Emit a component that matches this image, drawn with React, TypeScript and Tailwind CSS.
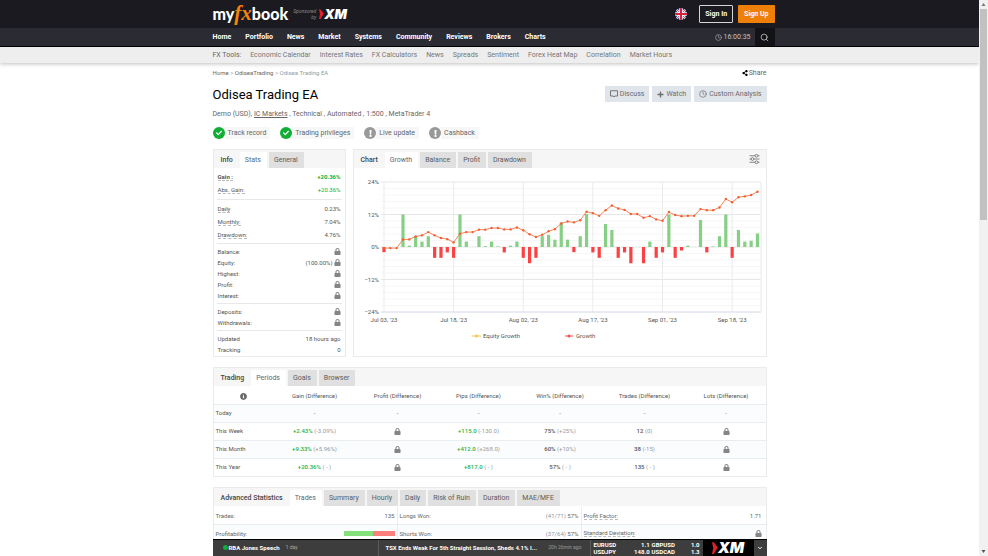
import React, { useState } from 'react';
import clsx from 'clsx';
import { Clock, Search, ChevronDown } from 'lucide-react';
import { FaLock, FaCheck, FaExclamation, FaPlus, FaShareAlt, FaInfoCircle } from 'react-icons/fa';

const navLinks = ['Home', 'Portfolio', 'News', 'Market', 'Systems', 'Community', 'Reviews', 'Brokers', 'Charts'];

const toolLinks = ['Economic Calendar', 'Interest Rates', 'FX Calculators', 'News', 'Spreads', 'Sentiment', 'Forex Heat Map', 'Correlation', 'Market Hours'];

const badges = [
  { label: 'Track record', ok: true },
  { label: 'Trading privileges', ok: true },
  { label: 'Live update', ok: false },
  { label: 'Cashback', ok: false },
];

// Cumulative growth in percent, one entry per trading day
const growth = [
  -0.4, -0.4, -0.4, 2.8, 2.8, 3.9, 4.3, 5.5, 4.3, 3.3, 2.9, 1.7, 4.9, 5.5, 5.5, 6.4, 6.4, 7, 7, 6.5,
  6.5, 7.2, 6.2, 4.7, 3.7, 4.5, 5.8, 6.6, 8.7, 9.4, 9.1, 9.9, 13, 12.5, 11.5, 13.6, 15.3, 14.2, 13.7, 12.2,
  12.2, 10.8, 11.4, 10.2, 9.7, 12.9, 11.8, 11.4, 11.5, 11.5, 14, 13.6, 13.6, 14.6, 17.7, 16.5, 18.4, 18.7, 19.2, 20.4,
];

// Daily result bars
const daily = [
  -1.9, 0, 0, 12, 0.5, 4, 2, 4, -4, -4, -2, -4, 12, 2, 0, 4, 0.3, 2, 0.2, -2,
  0.5, 2, -4, -6, -4, 4, 4.5, 2.7, 9, 2.7, -1.9, 4, 12.2, -2, -4, 8.5, 6.3, -4, -2, -6,
  0, -6, 2, -4, -2, 12, -4, -1.3, 0.5, 0, 10, -2, 0.2, 4, 12, -4, 6.3, 2, 2.3, 5,
];

const dates = ["Jul 03, '23", "Jul 18, '23", "Aug 02, '23", "Aug 17, '23", "Sep 01, '23", "Sep 18, '23"];

interface Stat {
  label: string;
  value: string;
  dotted?: boolean;
  bold?: boolean;
  green?: boolean;
  locked?: boolean;
}

const statGroups: { tall: boolean; rows: Stat[] }[] = [
  {
    tall: true,
    rows: [
      { label: 'Gain :', value: '+20.36%', dotted: true, bold: true, green: true },
      { label: 'Abs. Gain:', value: '+20.36%', dotted: true, green: true },
    ],
  },
  {
    tall: true,
    rows: [
      { label: 'Daily', value: '0.23%', dotted: true },
      { label: 'Monthly:', value: '7.04%', dotted: true },
      { label: 'Drawdown:', value: '4.76%', dotted: true },
    ],
  },
  {
    tall: false,
    rows: [
      { label: 'Balance:', value: '', locked: true },
      { label: 'Equity:', value: '(100.00%)', locked: true },
      { label: 'Highest:', value: '', locked: true },
      { label: 'Profit:', value: '', locked: true },
      { label: 'Interest:', value: '', locked: true },
    ],
  },
  {
    tall: false,
    rows: [
      { label: 'Deposits:', value: '', locked: true },
      { label: 'Withdrawals:', value: '', locked: true },
    ],
  },
  {
    tall: false,
    rows: [
      { label: 'Updated', value: '18 hours ago' },
      { label: 'Tracking', value: '0' },
    ],
  },
];

const periods = [
  { name: 'Today' },
  { name: 'This Week', gain: ['+2.43%', '(-3.09%)'], pips: ['+115.0', '(-130.0)'], win: ['75%', '(+25%)'], trades: ['12', '(0)'] },
  { name: 'This Month', gain: ['+9.33%', '(+5.96%)'], pips: ['+412.0', '(+268.0)'], win: ['60%', '(+10%)'], trades: ['38', '(-15)'] },
  { name: 'This Year', gain: ['+20.36%', '( - )'], pips: ['+817.0', '( - )'], win: ['57%', '( - )'], trades: ['135', '( - )'] },
];

const quotes = [
  ['EURUSD', '1.1', 'GBPUSD', '1.0'],
  ['USDJPY', '148.0', 'USDCAD', '1.3'],
];

const Lock = () => <FaLock className="inline-block size-[7px] text-[#858585]" aria-label="Locked" />;

const XmLogo = ({ large }: { large?: boolean }) => (
  <span className="flex items-center text-white" aria-label="XM">
    <svg viewBox="0 0 6 12" className={large ? 'h-3 w-1.5' : 'h-[10px] w-[5px]'}>
      <path d="M0 0 L2.2 0.8 L5.8 5.4 L1.8 12 L0 12 L1.2 6 Z" fill="#e0202b" />
    </svg>
    <span className={clsx('font-[Inter,sans-serif] leading-4 font-black italic', large ? 'text-[15px]' : 'text-[13px]')}>XM</span>
  </span>
);

const UkFlag = () => (
  <svg viewBox="0 0 24 24" className="size-3">
    <defs>
      <clipPath id="flag">
        <circle cx="12" cy="12" r="12" />
      </clipPath>
    </defs>
    <g clipPath="url(#flag)">
      <rect width="24" height="24" fill="#2b3f96" />
      <path d="M0 0 L24 24 M24 0 L0 24" stroke="#fff" strokeWidth="4" />
      <path d="M0 0 L24 24 M24 0 L0 24" stroke="#d8213b" strokeWidth="1.6" />
      <path d="M12 0 V24 M0 12 H24" stroke="#fff" strokeWidth="7" />
      <path d="M12 0 V24 M0 12 H24" stroke="#d8213b" strokeWidth="4" />
    </g>
  </svg>
);

const TabBar = ({ title, tabs, children }: { title: string; tabs: string[]; children?: React.ReactNode }) => {
  const [active, setActive] = useState(tabs[0]);
  return (
    <div className="flex h-[18px] items-end bg-[#f6f6f6] pl-[7px] text-[7px] leading-4">
      <h2 className="mr-[7px] font-medium text-[#444]">{title}</h2>
      <div className="flex gap-[2px]" role="tablist">
        {tabs.map(tab => (
          <button
            key={tab}
            role="tab"
            aria-selected={tab === active}
            onClick={() => setActive(tab)}
            className={clsx('h-4 pr-[6px] pl-[5px]', tab === active ? 'bg-white text-[#56697d]' : 'bg-[#e0e0e0] text-[#5c5c5c]')}
          >
            {tab}
          </button>
        ))}
      </div>
      {children}
    </div>
  );
};

const Header = () => (
  <header className="shadow-[0_1px_4px_rgba(0,0,0,0.25)]">
    <div className="bg-[#1a1a20]">
      <div className="mx-auto max-w-[554px]">
        <div className="-mr-2 flex h-7 items-center">
          <a href="#" className="flex items-baseline font-[Lato,sans-serif] text-[16px] leading-7 font-black text-white" aria-label="myfxbook">
            my
            <span className="font-['Liberation_Serif',serif] text-[21px] leading-5 font-bold text-[#f5840c] italic">fx</span>
            book
          </a>
          <div className="ml-[5px] flex items-center gap-[3px]">
            <span className="text-right text-[5px] leading-[6px] text-[#8b8b90] italic">
              Sponsored
              <br />
              by
            </span>
            <XmLogo />
          </div>
          <div className="ml-auto flex items-center text-[7px] font-bold text-white">
            <button aria-label="Language" className="mr-3">
              <UkFlag />
            </button>
            <button className="mr-[5px] h-[18px] rounded-[1px] border border-[#d5d5d5] px-[5px]">Sign In</button>
            <button className="h-[18px] rounded-[1px] bg-[#ee7f08] px-[6px]">Sign Up</button>
          </div>
        </div>
      </div>
    </div>
    <div className="border-b border-black bg-[#2a2b33]">
      <div className="mx-auto max-w-[554px]">
        <div className="-mr-2 flex h-[18px] items-center text-[7px] text-white">
          <nav className="flex gap-[14px] font-bold">
            {navLinks.map(link => (
              <a key={link} href="#">{link}</a>
            ))}
          </nav>
          <div className="ml-auto flex h-full items-center">
            <Clock className="mr-[2px] size-[7px] text-[#b5b5b8]" />
            <span className="mr-1 text-[#c2c2c6]">16:00:35</span>
            <button aria-label="Search" className="flex h-full w-5 items-center justify-center bg-[#131317]">
              <Search className="size-[9px] text-[#d0d0d0]" />
            </button>
          </div>
        </div>
      </div>
    </div>
    <div className="bg-[#eee]">
      <nav className="mx-auto flex h-4 max-w-[554px] items-center gap-[9px] text-[7px] whitespace-nowrap text-[#777]">
        <span className="text-[#666]">FX Tools:</span>
        {toolLinks.map(link => (
          <a key={link} href="#">{link}</a>
        ))}
      </nav>
    </div>
  </header>
);

const StatsPanel = () => (
  <section className="w-[133px] shrink-0 border border-[#ebebeb]">
    <TabBar title="Info" tabs={['Stats', 'General']} />
    {/* Stat rows, split by thin rules */}
    <div className="px-[3px] text-[6px] text-[#555]">
      {statGroups.map((group, i) => (
        <dl key={i} className="border-b border-[#e8e8e8] py-[2px] first:pb-[3px] last:border-b-0 last:pb-[1px]">
          {group.rows.map(row => (
            <div key={row.label} className={clsx('flex items-center justify-between px-[1px]', group.tall ? 'h-[13px]' : 'h-[11px]')}>
              <dt className={clsx('leading-[7px]', row.dotted && 'border-b border-dashed border-[#bbb]', row.bold && 'font-bold')}>{row.label}</dt>
              <dd className={clsx('flex items-center gap-[1px]', row.green && 'text-[#0faf35]', row.bold && 'font-bold')}>
                {row.value}
                {row.locked && <Lock />}
              </dd>
            </div>
          ))}
        </dl>
      ))}
    </div>
  </section>
);

const GrowthChart = () => {
  const left = 30;
  const top = 14;
  const height = 130;
  const step = 6.33;
  const x = (i: number) => left + i * step;
  const y = (v: number) => top + ((24 - v) / 48) * height;
  const line = growth.map((v, i) => `${x(i)},${y(v)}`).join(' ');

  return (
    <svg viewBox="0 0 412 188" className="w-full font-[Roboto,sans-serif]" role="img" aria-label="Growth chart">
      {/* Grid */}
      {Array.from({ length: 21 }, (_, i) => (
        <path key={i} d={`M27 ${top + i * 6.5} H407`} stroke={i % 5 === 0 ? '#e6e6e6' : '#f6f6f6'} />
      ))}
      {dates.map((date, i) => (
        <g key={date}>
          <path d={`M${x(i * 11)} ${top} V${top + height}`} stroke="#ebebeb" />
          <text x={x(i * 11)} y="154" textAnchor="middle" fontSize="6" fill="#555">{date}</text>
        </g>
      ))}
      <path d={`M407 ${top} V${top + height}`} stroke="#ebebeb" />
      <path d={`M27 ${top + height} H407`} stroke="#dfe3f2" />
      {[24, 12, 0, -12, -24].map(v => (
        <text key={v} x="25" y={y(v) + 2} textAnchor="end" fontSize="6" fill="#555">{v < 0 ? `−${-v}` : v}%</text>
      ))}
      {/* Daily bars */}
      {daily.map((v, i) => (
        <rect key={i} x={x(i) - 1.6} y={v > 0 ? y(v) : y(0)} width="3.2" height={(Math.abs(v) / 48) * height} fill={v > 0 ? '#86cf84' : '#fb4141'} />
      ))}
      <polyline points={line} fill="none" stroke="#f5764e" strokeWidth="0.9" />
      {growth.map((v, i) => (
        <circle key={i} cx={x(i)} cy={y(v)} r="1.2" fill="#f2602f" />
      ))}
      {/* Legend */}
      <path d="M118 168 H127" stroke="#f9c440" />
      <circle cx="122.500" cy="168" r="1.500" fill="#f9c440" />
      <text x="129" y="170" fontSize="6" fill="#555">Equity Growth</text>
      <path d="M211 168 H219" stroke="#f5534a" />
      <circle cx="215" cy="168" r="1.500" fill="#f5534a" />
      <text x="222" y="170" fontSize="6" fill="#555">Growth</text>
    </svg>
  );
};

const ChartPanel = () => (
  <section className="min-w-0 flex-1 border border-[#ebebeb]">
    <TabBar title="Chart" tabs={['Growth', 'Balance', 'Profit', 'Drawdown']}>
      <button aria-label="Chart settings" className="mr-[6px] ml-auto flex h-[18px] items-center">
        <svg viewBox="0 0 22 20" className="h-[10px] w-[11px]" fill="none" stroke="#555" strokeWidth="1.4">
          <path d="M1 3.500 H12 M18 3.500 H21 M1 10 H4 M10 10 H21 M1 16.500 H12 M18 16.500 H21" />
          <circle cx="15" cy="3.500" r="2.800" />
          <circle cx="7" cy="10" r="2.800" />
          <circle cx="15" cy="16.500" r="2.800" />
        </svg>
      </button>
    </TabBar>
    <GrowthChart />
  </section>
);

const Difference = ({ pair, green }: { pair?: string[]; green?: boolean }) => (
  <td>
    {pair ? (
      <>
        <span className={green ? 'font-medium text-[#1fb141]' : 'font-medium text-[#555]'}>{pair[0]}</span>{' '}
        <span className="text-[#999]">{pair[1]}</span>
      </>
    ) : (
      '-'
    )}
  </td>
);

const TradingPanel = () => (
  <section className="border border-[#ebebeb]">
    <TabBar title="Trading" tabs={['Periods', 'Goals', 'Browser']} />
    <table className="w-full table-fixed text-center text-[6px] leading-2 text-[#666]">
      <thead>
        <tr className="h-[18px] text-[#555]">
          <th className="w-[60px] pt-[3px]">
            <FaInfoCircle className="mx-auto size-[7px] text-[#666]" aria-label="Info" />
          </th>
          <th className="w-[82px] pt-[3px] font-normal">Gain (Difference)</th>
          <th className="w-[84px] pt-[3px] font-normal">Profit (Difference)</th>
          <th className="w-[78px] pt-[3px] font-normal">Pips (Difference)</th>
          <th className="w-[85px] pt-[3px] font-normal">Win% (Difference)</th>
          <th className="w-[84px] pt-[3px] font-normal">Trades (Difference)</th>
          <th className="pt-[3px] font-normal">Lots (Difference)</th>
        </tr>
      </thead>
      <tbody>
        {periods.map(period => (
          <tr key={period.name} className="h-[18px] border-t border-[#e8edf0] odd:bg-[#fafcfe]">
            <th className="pl-[2px] text-left font-normal text-[#555]">{period.name}</th>
            <Difference pair={period.gain} green />
            <td>{period.gain ? <Lock /> : '-'}</td>
            <Difference pair={period.pips} green />
            <Difference pair={period.win} />
            <Difference pair={period.trades} />
            <td>{period.gain ? <Lock /> : '-'}</td>
          </tr>
        ))}
      </tbody>
    </table>
  </section>
);

const AdvancedPanel = () => (
  <section className="border border-[#ebebeb]">
    <TabBar title="Advanced Statistics" tabs={['Trades', 'Summary', 'Hourly', 'Daily', 'Risk of Ruin', 'Duration', 'MAE/MFE']} />
    <dl className="grid grid-cols-3 pt-[1px] text-[6px] text-[#666]">
      <div className="flex h-[18px] items-center justify-between border-r border-b border-[#e8edf0] px-[2px]">
        <dt>Trades:</dt>
        <dd>135</dd>
      </div>
      <div className="flex h-[18px] items-center justify-between border-r border-b border-[#e8edf0] px-[2px]">
        <dt>Longs Won:</dt>
        <dd><span className="text-[#999]">(41/71)</span> 57%</dd>
      </div>
      <div className="flex h-[18px] items-center justify-between border-b border-[#e8edf0] pr-[4px] pl-[2px]">
        <dt className="border-b border-dashed border-[#bbb] leading-[7px]">Profit Factor:</dt>
        <dd className="text-[#56697d]">1.71</dd>
      </div>
      <div className="flex h-4 items-center justify-between border-r border-[#e8edf0] bg-[#fafcfe] px-[2px]">
        <dt>Profitability:</dt>
        <dd className="flex h-[5px] w-[51px]" aria-label="Won 57%, lost 43%">
          <span className="w-[57%] bg-[#83e07a]" />
          <span className="flex-1 bg-[#fb7f7d]" />
        </dd>
      </div>
      <div className="flex h-4 items-center justify-between border-r border-[#e8edf0] bg-[#fafcfe] px-[2px]">
        <dt>Shorts Won:</dt>
        <dd><span className="text-[#999]">(37/64)</span> 57%</dd>
      </div>
      <div className="flex h-4 items-center justify-between bg-[#fafcfe] pr-[4px] pl-[2px]">
        <dt className="border-b border-dashed border-[#bbb] leading-[7px]">Standard Deviation:</dt>
        <dd className="flex"><Lock /></dd>
      </div>
    </dl>
  </section>
);

// News and quotes strip pinned over the bottom of the page
const Ticker = () => (
  <aside className="absolute inset-x-0 bottom-0">
    <div className="mx-auto flex h-[17px] max-w-[554px] items-stretch border-t border-black bg-[#3d3d3d] text-[6px] leading-[7px] whitespace-nowrap text-white">
      <div className="flex w-[166px] items-center border-r border-[#5a5a5a] pb-[1px] pl-[10px]">
        <span className="mr-[1px] size-[5px] rounded-full bg-[#0faf35]" />
        <a href="#" className="font-bold">RBA Jones Speech</a>
        <span className="ml-[6px] text-[5px] text-[#aaa]">1 day</span>
      </div>
      <div className="flex min-w-0 flex-1 items-center border-r border-[#5a5a5a] pr-[8px] pb-[1px] pl-[7px]">
        <a href="#" className="font-bold">TSX Ends Weak For 5th Straight Session, Sheds 4.1% I...</a>
        <span className="ml-auto text-[5px] text-[#999]">20h 26min ago</span>
      </div>
      <table className="mx-[3px] w-[106px] self-center font-bold">
        <tbody>
          {quotes.map(row => (
            <tr key={row[0]}>
              <td>{row[0]}</td>
              <td className="text-right">{row[1]}</td>
              <td className="pl-[2px]">{row[2]}</td>
              <td className="text-right">{row[3]}</td>
            </tr>
          ))}
        </tbody>
      </table>
      <a href="#" className="flex w-[51px] items-center justify-center bg-black">
        <XmLogo large />
      </a>
      <button aria-label="Collapse" className="flex w-[13px] items-center justify-center">
        <ChevronDown className="size-[6px]" strokeWidth={4} />
      </button>
    </div>
  </aside>
);

const Scrollbar = () => (
  <div className="flex w-[9px] shrink-0 flex-col items-center justify-between bg-[#f1f1f1]" aria-hidden="true">
    <svg viewBox="0 0 9 9" className="size-[9px]"><path d="M4.500 3 L6.500 6 H2.500 Z" fill="#777" /></svg>
    <div className="h-[38%] w-[7px] bg-[#c1c1c1]" />
    <div className="flex-1" />
    <svg viewBox="0 0 9 9" className="size-[9px]"><path d="M4.500 6 L6.500 3 H2.500 Z" fill="#555" /></svg>
  </div>
);

export default function App() {
  return (
    <div className="flex h-screen overflow-hidden bg-white font-[Roboto,sans-serif]">
      <div className="relative min-w-0 flex-1 overflow-hidden">
        <Header />
        <main className="mx-auto max-w-[554px] pt-[5px]">
          <div className="flex h-[10px] items-center justify-between text-[#666]">
            <nav aria-label="Breadcrumb" className="text-[6px] leading-2">
              <a href="#">Home</a> <span className="text-[#aaa]">&gt;</span> <a href="#">OdiseaTrading</a>{' '}
              <span className="text-[#aaa]">&gt;</span> <span className="text-[#8fa0a8]">Odisea Trading EA</span>
            </nav>
            <a href="#" className="flex items-center gap-[1px] text-[7px]">
              <FaShareAlt className="size-[6px] text-black" />
              Share
            </a>
          </div>
          <div className="mt-2 flex h-4 items-center justify-between">
            <h1 className="pt-[1px] text-[13px] leading-4 text-black">Odisea Trading EA</h1>
            <div className="flex gap-[3px] text-[7px] text-[#6b6b6b]">
              <button className="flex h-4 items-center gap-[2px] bg-[#e0e4eb] px-[5px]">
                <svg viewBox="0 0 16 16" className="size-2" fill="none" stroke="currentColor" strokeWidth="1.8">
                  <path d="M1 1.500 H15 V12 H9.500 L8 14 L6.500 12 H1 Z" />
                </svg>
                Discuss
              </button>
              <button className="flex h-4 items-center gap-[2px] bg-[#e0e4eb] px-[5px]">
                <FaPlus className="size-[7px]" />
                Watch
              </button>
              <button className="flex h-4 items-center gap-[2px] bg-[#e0e4eb] px-[5px]">
                <Clock className="size-2" />
                Custom Analysis
              </button>
            </div>
          </div>
          <p className="mt-[7px] text-[7px] leading-[10px] text-[#666]">
            Demo (USD), <a href="#" className="underline">IC Markets</a> , Technical , Automated , 1:500 , MetaTrader 4
          </p>
          <ul className="mt-2 flex gap-[10px] text-[7px] text-[#666]">
            {badges.map(badge => (
              <li key={badge.label} className="flex items-center">
                <span className={clsx('flex size-3 items-center justify-center rounded-full text-white', badge.ok ? 'bg-[#0faf35]' : 'bg-[#999]')}>
                  {badge.ok ? <FaCheck className="size-[6px]" /> : <FaExclamation className="size-[7px]" />}
                </span>
                <span className="h-3 bg-[#f7f7f7] pr-[4px] pl-[3px] leading-3">{badge.label}</span>
              </li>
            ))}
          </ul>
          <div className="mt-[10px] flex gap-[7px]">
            <StatsPanel />
            <ChartPanel />
          </div>
          <div className="mt-[10px]">
            <TradingPanel />
          </div>
          <div className="mt-[10px]">
            <AdvancedPanel />
          </div>
        </main>
        <Ticker />
      </div>
      <Scrollbar />
    </div>
  );
}
